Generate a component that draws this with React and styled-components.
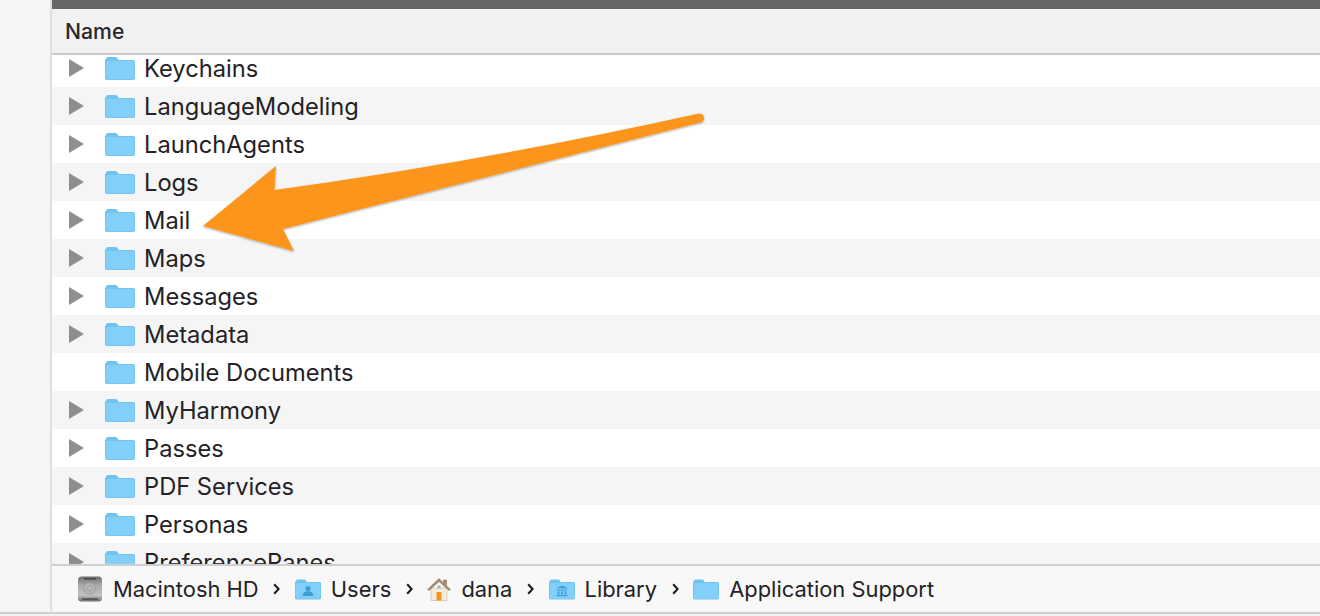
import React from "react";
import styled, { createGlobalStyle } from "styled-components";

const Global = createGlobalStyle`
  html, body { margin: 0; padding: 0; background: #f6f6f6; }
  body { font-family: Inter, "Liberation Sans", sans-serif; color: #242226; }
`;
const Window = styled.div`
  position: relative; width: 1320px; height: 616px; overflow: hidden;
  display: flex; align-items: flex-start; background: #f2f2f2;
`;
const Sidebar = styled.div`
  width: 50px; flex: none; height: 612px; background: #f5f5f5;
  border-right: 2px solid #dedede; border-bottom: 2px solid #cfcfcf;
`;
const Main = styled.div`
  flex: 1; min-width: 0; display: flex; flex-direction: column; height: 614px;
`;
const TopBar = styled.div`height: 9px; flex: none; background: #666666;`;
const Header = styled.div`
  height: 44px; flex: none; box-sizing: border-box; background: #f1f1f1;
  display: flex; align-items: center; padding-left: 13px;
  font-size: 21.2px; font-weight: 500; color: #2a282c;
`;
const HeaderRule = styled.div`height: 2px; flex: none; background: #c9c9c9;`;
const List = styled.div`flex: 1; min-height: 0; overflow: hidden; background: #fff;`;
const Rows = styled.div`margin-top: -6px;`;
const Row = styled.div`
  height: 38px; display: flex; align-items: center;
  background: ${p => (p.$alt ? "#f5f5f5" : "#ffffff")};
`;
const Disclosure = styled.div`
  width: 15px; height: 18px; margin-left: 17px; flex: none;
  background: ${p => (p.$hidden ? "transparent" : "#8e8e8e")};
  clip-path: polygon(0 0, 100% 50%, 0 100%);
`;
const FolderSlot = styled.div`margin-left: 21px; width: 30px; height: 24px; flex: none; display: flex;`;
const Name = styled.span`
  margin: 2px 0 0 9px; font-size: 23.7px; white-space: nowrap; color: #242226; line-height: 1;
`;
const PathRule = styled.div`height: 2px; flex: none; background: #cfcfcf;`;
const PathBar = styled.div`
  height: 46px; flex: none; background: #f8f8f8; display: flex; align-items: center; padding-left: 25px;
  border-bottom: 2px solid #cfcfcf;
`;
const Crumb = styled.div`display: flex; align-items: center; gap: 10px;`;
const CrumbText = styled.span`font-size: 21.9px; white-space: nowrap; color: #242226; line-height: 1; margin-top: 1px;`;
const Sep = styled.svg`width: 7px; height: 12px; margin: 0 14.6px; flex: none;`;
const ArrowOverlay = styled.svg`position: absolute; left: 0; top: 0; width: 1320px; height: 616px; pointer-events: none;`;

const Folder = ({ width = 30, height = 24, children }) => (
  <svg width={width} height={height} viewBox="0 0 30 24">
    <path d="M1 3.5C1 1.8 1.8 1 3 1h7.5c1 0 1.5.5 2.2 1.6L13.5 4H28c1 0 2 .8 2 2v16c0 1.2-.8 2-2 2H2c-1.2 0-2-.8-2-2V3.5z" fill="#70c2ef" />
    <path d="M0.8 6.5C.8 5.6 1.4 5 2.3 5H28c.8 0 1.2.6 1.2 1.4v15.2c0 1-.6 1.6-1.4 1.6H2.2c-.9 0-1.4-.6-1.4-1.6V6.5z" fill="#82d0fa" />
    {children}
  </svg>
);

const Disk = () => (
  <svg width="26" height="26" viewBox="0 0 26 26">
    <defs>
      <linearGradient id="hd" x1="0" y1="0" x2="0" y2="1">
        <stop offset="0" stopColor="#6e6e6e" />
        <stop offset=".35" stopColor="#a9a9a8" />
        <stop offset=".75" stopColor="#c2c2c0" />
        <stop offset="1" stopColor="#6a6a6a" />
      </linearGradient>
    </defs>
    <rect x="1" y="0.5" width="24" height="25" rx="3.5" fill="url(#hd)" />
    <rect x="7" y="2.2" width="12" height="1.3" fill="#3e3e3e" />
    <circle cx="12.5" cy="12.5" r="6" fill="#b2b2b0" stroke="#949494" strokeWidth=".6" />
    <circle cx="12.5" cy="12.5" r="2.2" fill="#bdbdbb" stroke="#8e8e8e" strokeWidth=".5" />
    <rect x="5" y="22.4" width="16" height="1.3" fill="#444" />
  </svg>
);

const House = () => (
  <svg width="24" height="26" viewBox="0 0 24 26">
    <path d="M4 12h16v12.5H4z" fill="#f3ecdd" stroke="#c4b8a2" strokeWidth=".6" />
    <path d="M12 2.5L.5 13.5l1.5 1L12 5.5l10 9 1.5-1-4-3.8V4h-3v2.9z" fill="#a88a6c" stroke="#8a6e54" strokeWidth=".5" />
    <rect x="9.5" y="16" width="5" height="8.5" fill="#f0961c" />
    <rect x="10.5" y="9.5" width="3" height="3" fill="#a5b6c4" />
  </svg>
);

const Chevron = () => (
  <Sep viewBox="0 0 7 12">
    <path d="M1.2 1.2L5.6 6 1.2 10.8" fill="none" stroke="#1e1c20" strokeWidth="2.1" />
  </Sep>
);

const items = [
  "Keychains", "LanguageModeling", "LaunchAgents", "Logs", "Mail", "Maps", "Messages",
  "Metadata", "Mobile Documents", "MyHarmony", "Passes", "PDF Services", "Personas", "PreferencePanes",
];

export default function App() {
  return (
    <Window>
      <Global />
      <Sidebar />
      <Main>
        <TopBar />
        <Header>Name</Header>
        <HeaderRule />
        <List>
          <Rows>
            {items.map((n, i) => (
              <Row key={n} $alt={i % 2 === 1}>
                <Disclosure $hidden={n === "Mobile Documents"} />
                <FolderSlot><Folder /></FolderSlot>
                <Name>{n}</Name>
              </Row>
            ))}
          </Rows>
        </List>
        <PathRule />
        <PathBar>
          <Crumb><Disk /><CrumbText>Macintosh HD</CrumbText></Crumb>
          <Chevron />
          <Crumb>
            <Folder width={26} height={22}>
              <circle cx="15" cy="11.5" r="3" fill="#3d9ed6" />
              <path d="M9 20c0-4 2.5-5.5 6-5.5s6 1.5 6 5.5z" fill="#3d9ed6" />
            </Folder>
            <CrumbText>Users</CrumbText>
          </Crumb>
          <Chevron />
          <Crumb><House /><CrumbText>dana</CrumbText></Crumb>
          <Chevron />
          <Crumb>
            <Folder width={26} height={22}>
              <path d="M15 8l7 3.2H8zM9 12.5h12v1.2H9zM10 14.5h2v4h-2zM14 14.5h2v4h-2zM18 14.5h2v4h-2zM8.5 19h13v1.5h-13z" fill="#3d9ed6" />
            </Folder>
            <CrumbText>Library</CrumbText>
          </Crumb>
          <Chevron />
          <Crumb><Folder width={26} height={22} /><CrumbText>Application Support</CrumbText></Crumb>
        </PathBar>
      </Main>
      <ArrowOverlay viewBox="0 0 1320 616">
        <defs>
          <filter id="sh" x="-5%" y="-10%" width="110%" height="125%">
            <feDropShadow dx="0" dy="1" stdDeviation="1" floodColor="#000" floodOpacity=".35" />
          </filter>
        </defs>
        <path
          d="M699 113.5Q704 114 704 118Q704 121.5 700 122.5L283 229L294 251L203 226L276 166L274.5 190Q480 162 699 113.5Z"
          fill="#fc951e" filter="url(#sh)"
        />
      </ArrowOverlay>
    </Window>
  );
}
